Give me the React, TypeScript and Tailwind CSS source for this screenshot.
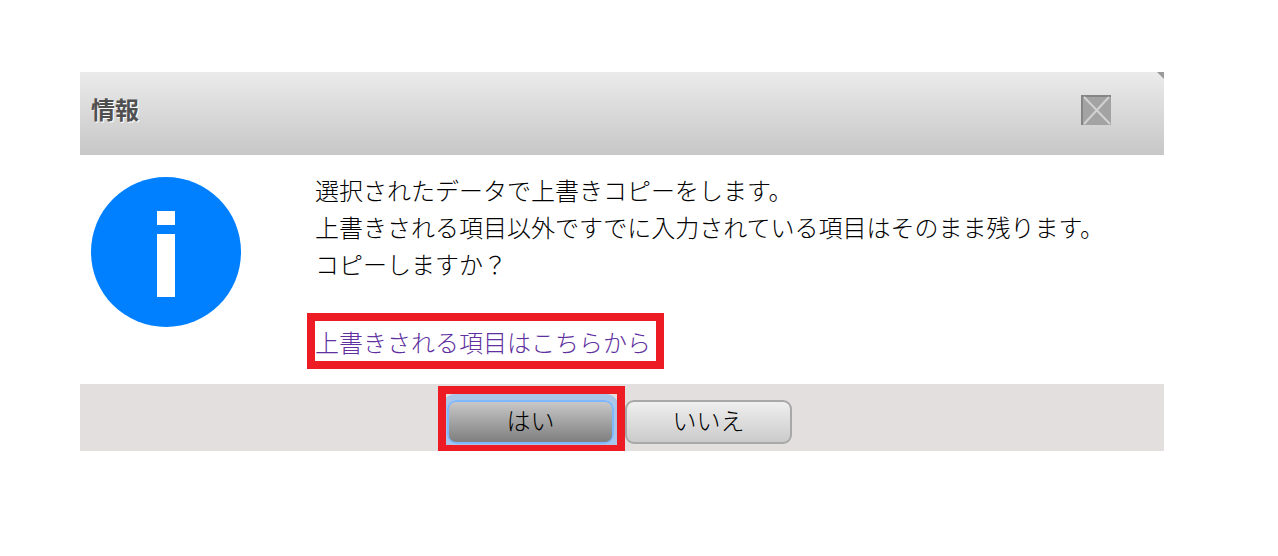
const FUENTE = "font-['Noto_Sans_CJK_JP','Noto_Sans',sans-serif]";

function InfoIcon() {
  return (
    <svg width="150" height="150" viewBox="0 0 150 150" className="block">
      <circle cx="75" cy="75" r="75" fill="#0080ff" />
      <rect x="66" y="34" width="18" height="14" fill="#ffffff" />
      <rect x="66" y="57" width="18" height="63" fill="#ffffff" />
    </svg>
  );
}

function CloseIcon() {
  return (
    <svg width="30" height="30" viewBox="0 0 30 30" className="block mt-[2px]">
      <rect width="30" height="30" fill="#a3a3a3" />
      <path d="M0 0H30V2H2V30H0Z" fill="#858585" />
      <path d="M3 2L29 29M28 2L3 29" stroke="#d2d2d2" strokeWidth="2" fill="none" />
    </svg>
  );
}

export default function App() {
  return (
    <div className={`relative w-[1278px] h-[556px] bg-white pt-[72px] pl-[80px] ${FUENTE}`}>
      <div className="w-[1084px]">
        <div className="relative h-[83px] flex items-center justify-between pl-[11px] pr-[53px] pb-[9px] bg-gradient-to-b from-[#ebebeb] to-[#c7c7c7]">
          <h1 className="text-[24px] leading-none font-bold text-[#505050] [text-shadow:1px_1px_0_#ffffff]">情報</h1>
          <CloseIcon />
          <svg width="7" height="7" viewBox="0 0 7 7" className="absolute top-0 right-0">
            <path d="M0 0H7V7Z" fill="#9a9a9a" />
          </svg>
        </div>

        <div className="h-[229px] flex">
          <div className="w-[235px] shrink-0 pl-[11px] pt-[22px]">
            <InfoIcon />
          </div>
          <div className="pt-4 text-[24px] leading-[37px] font-light text-black">
            <p>選択されたデータで上書きコピーをします。</p>
            <p>上書きされる項目以外ですでに入力されている項目はそのまま残ります。</p>
            <p>コピーしますか？</p>
            <a href="#" className="block mt-[41px] text-[#6030a0]">上書きされる項目はこちらから</a>
          </div>
        </div>

        <div className="h-[67px] flex justify-center items-start gap-[11px] pt-4 pr-[5px] bg-[#e3dfdf]">
          <button className="w-[167px] h-[44px] pb-1 rounded-[9px] border-2 border-[#7fb8ff] bg-gradient-to-b from-[#c8c8c8] to-[#7f7f7f] shadow-[0_0_0_6px_#a9c6e8] text-[24px] font-light text-black">はい</button>
          <button className="w-[167px] h-[44px] pb-1 rounded-[9px] border-2 border-[#a8a8a8] bg-gradient-to-b from-[#efefef] to-[#cbcbcb] text-[24px] font-light text-black">いいえ</button>
        </div>
      </div>

      <div className="absolute left-[307px] top-[313px] w-[357px] h-[56px] border-8 border-[#ed1c24]" />
      <div className="absolute left-[438px] top-[386px] w-[187px] h-[65px] border-8 border-b-[6px] border-[#ed1c24]" />
    </div>
  );
}
